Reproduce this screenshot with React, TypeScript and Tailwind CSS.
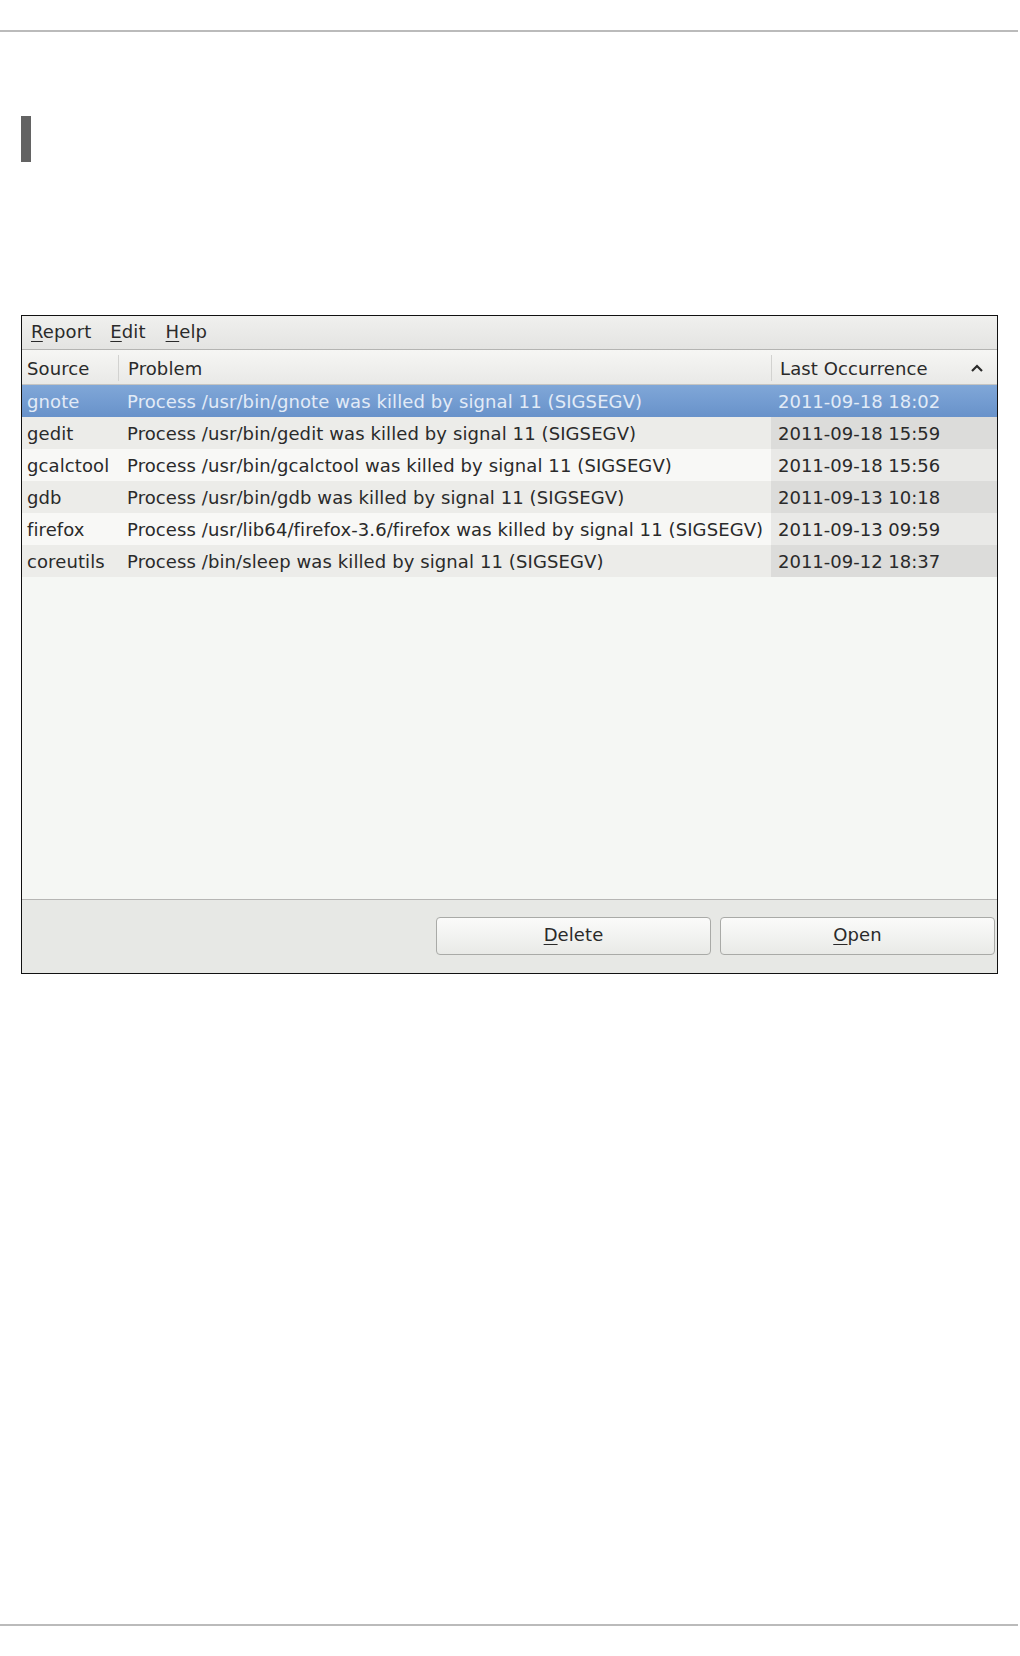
import { useState } from "react";

type Row = {
  source: string;
  problem: string;
  when: string;
};

const rows: Row[] = [
  { source: "gnote", problem: "Process /usr/bin/gnote was killed by signal 11 (SIGSEGV)", when: "2011-09-18 18:02" },
  { source: "gedit", problem: "Process /usr/bin/gedit was killed by signal 11 (SIGSEGV)", when: "2011-09-18 15:59" },
  { source: "gcalctool", problem: "Process /usr/bin/gcalctool was killed by signal 11 (SIGSEGV)", when: "2011-09-18 15:56" },
  { source: "gdb", problem: "Process /usr/bin/gdb was killed by signal 11 (SIGSEGV)", when: "2011-09-13 10:18" },
  { source: "firefox", problem: "Process /usr/lib64/firefox-3.6/firefox was killed by signal 11 (SIGSEGV)", when: "2011-09-13 09:59" },
  { source: "coreutils", problem: "Process /bin/sleep was killed by signal 11 (SIGSEGV)", when: "2011-09-12 18:37" },
];

function Key({ children }: { children: string }) {
  return <span className="underline underline-offset-[3px] decoration-1">{children}</span>;
}

function SortCaret() {
  return (
    <svg width="16" height="12" viewBox="0 0 16 12" className="shrink-0">
      <polyline points="3,9 8,4 13,9" fill="none" stroke="#2b2b2b" strokeWidth="2.2" />
    </svg>
  );
}

export default function App() {
  const [selected, setSelected] = useState(0);

  return (
    <div
      className="w-[1020px] h-[1656px] bg-white flex flex-col text-[#2a2a2a]"
      style={{ fontFamily: '"DejaVu Sans", "Liberation Sans", sans-serif' }}
    >
      <div className="mt-[30px] h-[2px] w-[1018px] bg-[#bbbbbb]" />

      <div className="ml-[21px] mt-[84px] w-[10px] h-[46px] bg-[#636363]" />

      {/* Problem reporting window */}
      <div className="ml-[21px] mt-[153px] w-[977px] h-[659px] border border-[#111] flex flex-col text-[18px] tracking-[0.1px]">
        {/* Menu bar */}
        <div className="h-[34px] shrink-0 flex items-center pl-[9px] pb-[2px] bg-gradient-to-b from-[#f0f0ee] to-[#e4e4e2] border-b border-[#b4b4b2]">
          <span className="mr-[19px]"><Key>R</Key>eport</span>
          <span className="mr-[20px]"><Key>E</Key>dit</span>
          <span><Key>H</Key>elp</span>
        </div>

        {/* Column header */}
        <div className="h-[35px] shrink-0 flex items-stretch pt-[2px] bg-gradient-to-b from-[#f6f6f4] to-[#e9e9e7] border-b border-[#c4c4c2]">
          <div className="w-[96px] flex items-center pl-[5px]">Source</div>
          <div className="w-[653px] flex items-center pl-[9px] border-l border-[#d2d2d0] my-[3px]">Problem</div>
          <div className="flex-1 flex items-center justify-between pl-[8px] pr-[12px] border-l border-[#d2d2d0] my-[3px]">
            <span>Last Occurrence</span>
            <SortCaret />
          </div>
        </div>

        {/* Rows */}
        <div className="flex flex-col shrink-0">
          {rows.map((row, i) => {
            const isSel = i === selected;
            const odd = i % 2 === 1;
            const rowBg = isSel
              ? "bg-gradient-to-b from-[#80a7d8] to-[#6892ca] text-[#e2ebf7]"
              : odd
                ? "bg-[#ecece9]"
                : "bg-[#f8f8f6]";
            const dateBg = isSel ? "" : odd ? "bg-[#dcdcda]" : "bg-[#e9e9e7]";
            return (
              <div
                key={row.source}
                onClick={() => setSelected(i)}
                className={`h-[32px] flex items-stretch ${rowBg}`}
              >
                <div className="w-[96px] pl-[5px] flex items-center whitespace-nowrap">{row.source}</div>
                <div className="w-[653px] pl-[9px] flex items-center whitespace-nowrap">{row.problem}</div>
                <div className={`flex-1 flex items-center pl-[7px] tracking-[0px] whitespace-nowrap ${dateBg}`}>{row.when}</div>
              </div>
            );
          })}
        </div>

        {/* Empty list area */}
        <div className="flex-1 bg-[#f5f7f4]" />

        {/* Buttons */}
        <div className="h-[74px] shrink-0 flex justify-end items-start gap-[9px] pt-[17px] pr-[2px] bg-[#e7e8e5] border-t border-[#b6b6b4]">
          <button className="w-[275px] h-[38px] pb-[4px] rounded-[4px] border border-[#a9aaa7] bg-gradient-to-b from-[#fbfbfa] to-[#e9eae7] text-[#2a2a2a]">
            <Key>D</Key>elete
          </button>
          <button className="w-[275px] h-[38px] pb-[4px] rounded-[4px] border border-[#a9aaa7] bg-gradient-to-b from-[#fbfbfa] to-[#e9eae7] text-[#2a2a2a]">
            <Key>O</Key>pen
          </button>
        </div>
      </div>

      <div className="mt-[650px] h-[2px] w-[1018px] bg-[#bbbbbb]" />
    </div>
  );
}
